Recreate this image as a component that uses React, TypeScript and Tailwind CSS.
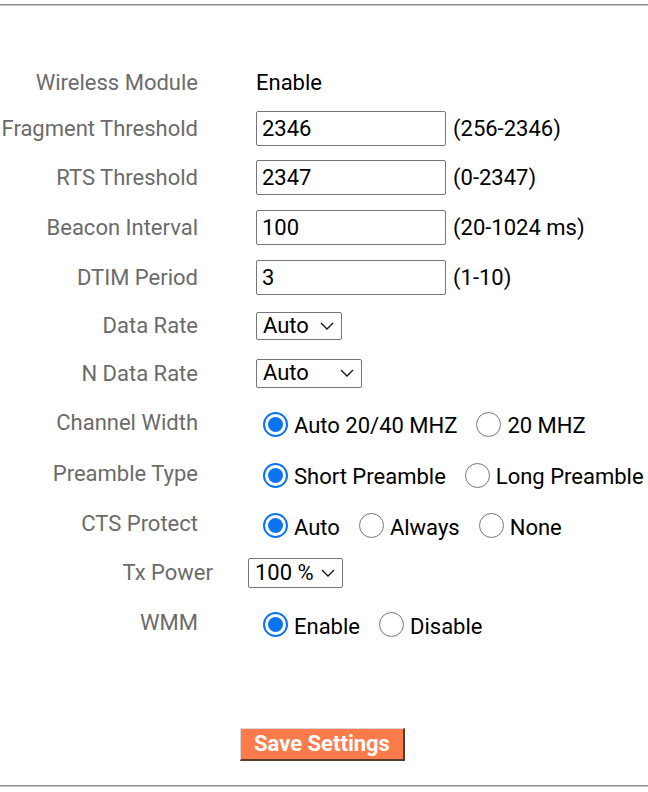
import React from "react";

type RadioOpt = { label: string; checked?: boolean };

const Chevron = () => (
	<svg width="14" height="8" viewBox="0 0 14 8" className="shrink-0">
		<path d="M1 1l6 6 6-6" fill="none" stroke="#111" strokeWidth="1.3"/>
	</svg>
);

function Select({ value, size }: { value: string; size: string }) {
	return (
		<div className={`flex items-center justify-between border border-[#767676] rounded-[2px] bg-white text-black pl-[6px] pr-[7px] ${size}`}>
			<span className="leading-none">{value}</span>
			<Chevron/>
		</div>
	);
}

function TextInput({ value }: { value: string }) {
	return (
		<div className="w-[190px] h-[35px] border border-[#767676] rounded-[2px] flex items-center pl-[5px] text-black">
			{value}
		</div>
	);
}

function Radio({ checked }: { checked?: boolean }) {
	if (checked) {
		return (
			<span className="w-[25px] h-[25px] rounded-full border-[2px] border-[#0b74ee] grid place-items-center shrink-0">
				<span className="w-[15px] h-[15px] rounded-full bg-[#0b74ee]"/>
			</span>
		);
	}
	return <span className="w-[25px] h-[25px] rounded-full border border-[#777] shrink-0"/>;
}

function RadioGroup({ options }: { options: RadioOpt[] }) {
	return (
		<div className="flex items-center pt-[4px] ml-[7px]">
			{options.map((o, i) => (
				<div key={o.label} className={`flex items-center ${i > 0 ? "ml-[19px]" : ""}`}>
					<Radio checked={o.checked}/>
					<span className="ml-[6px] text-black pt-[3px]">{o.label}</span>
				</div>
			))}
		</div>
	);
}

function Row({ label, height, children, wide }: { label: string; height: string; children: React.ReactNode; wide?: boolean }) {
	return (
		<div className={`flex items-center ${height}`}>
			<div className={`text-right text-[#6b6b6b] whitespace-nowrap ${wide ? "w-[213px]" : "w-[198px]"}`}>{label}</div>
			<div className={`flex items-center ${wide ? "ml-[35px]" : "ml-[58px]"}`}>{children}</div>
		</div>
	);
}

export default function App() {
	return (
		<div className="w-[648px] h-[792px] bg-white overflow-hidden text-[22px] font-['Roboto',sans-serif] flex flex-col">
			<div className="h-[4px]"/>
			<div className="h-[2px] bg-[#8a8a8a] border-b border-[#c8c8c8]"/>
			<div className="h-[54px]"/>

			<Row label="Wireless Module" height="h-[45px]">
				<span className="text-black">Enable</span>
			</Row>
			<Row label="Fragment Threshold" height="h-[47px]">
				<TextInput value="2346"/>
				<span className="ml-[7px] text-black">(256-2346)</span>
			</Row>
			<Row label="RTS Threshold" height="h-[50px]">
				<TextInput value="2347"/>
				<span className="ml-[7px] text-black">(0-2347)</span>
			</Row>
			<Row label="Beacon Interval" height="h-[51px]">
				<TextInput value="100"/>
				<span className="ml-[7px] text-black">(20-1024 ms)</span>
			</Row>
			<Row label="DTIM Period" height="h-[49px]">
				<TextInput value="3"/>
				<span className="ml-[7px] text-black">(1-10)</span>
			</Row>
			<Row label="Data Rate" height="h-[47px]">
				<Select value="Auto" size="w-[86px] h-[28px]"/>
			</Row>
			<Row label="N Data Rate" height="h-[48px]">
				<Select value="Auto" size="w-[106px] h-[29px]"/>
			</Row>
			<Row label="Channel Width" height="h-[50px]">
				<RadioGroup options={[{ label: "Auto 20/40 MHZ", checked: true }, { label: "20 MHZ" }]}/>
			</Row>
			<Row label="Preamble Type" height="h-[52px]">
				<RadioGroup options={[{ label: "Short Preamble", checked: true }, { label: "Long Preamble" }]}/>
			</Row>
			<Row label="CTS Protect" height="h-[49px]">
				<RadioGroup options={[{ label: "Auto", checked: true }, { label: "Always" }, { label: "None" }]}/>
			</Row>
			<Row label="Tx Power" height="h-[49px]" wide>
				<Select value="100 %" size="w-[95px] h-[30px]"/>
			</Row>
			<Row label="WMM" height="h-[51px]">
				<RadioGroup options={[{ label: "Enable", checked: true }, { label: "Disable" }]}/>
			</Row>

			<div className="h-[80px]"/>
			<div className="flex">
				<button className="ml-[240px] w-[165px] h-[33px] bg-[#fd7b4b] text-white font-bold text-[22px] border-t border-l border-t-[#d9d9d9] border-l-[#d9d9d9] border-b-2 border-r-2 border-b-[#5a3a2a] border-r-[#5a3a2a] leading-none pb-[1px]">
					Save Settings
				</button>
			</div>
			<div className="h-[24px]"/>
			<div className="h-[2px] bg-[#8a8a8a] border-b border-[#c8c8c8]"/>
		</div>
	);
}
